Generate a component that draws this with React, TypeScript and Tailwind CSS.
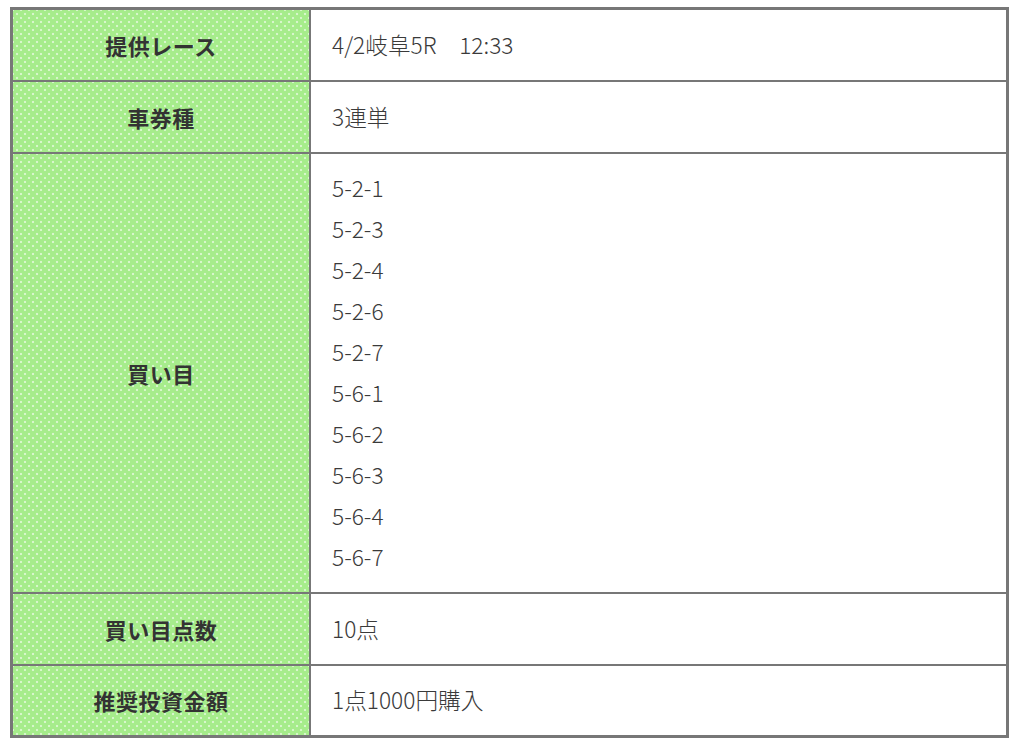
const FONT = "font-['Noto_Sans_CJK_JP','Noto_Sans',sans-serif]";

const rows: { label: string; values: string[]; h: string }[] = [
  { label: "提供レース", values: ["4/2岐阜5R\u300012:33"], h: "h-[70px]" },
  { label: "車券種", values: ["3連単"], h: "h-[70px]" },
  {
    label: "買い目",
    values: ["5-2-1", "5-2-3", "5-2-4", "5-2-6", "5-2-7", "5-6-1", "5-6-2", "5-6-3", "5-6-4", "5-6-7"],
    h: "",
  },
  { label: "買い目点数", values: ["10点"], h: "h-[70px]" },
  { label: "推奨投資金額", values: ["1点1000円購入"], h: "h-[69px]" },
];

const GREEN =
  "bg-[#a6ec8b] [background-image:radial-gradient(circle,rgba(255,255,255,0.55)_1px,transparent_1.6px),radial-gradient(circle,rgba(255,255,255,0.55)_1px,transparent_1.6px)] [background-size:8px_8px] [background-position:0_0,4px_4px]";

export default function App() {
  return (
    <div className={`min-h-[750px] bg-white pt-[7px] pl-[10px] ${FONT}`}>
      <div className="w-[999px] border-[3px] border-[#777]">
        {rows.map((row, i) => {
          const multi = row.values.length > 1;
          return (
            <div key={row.label} className={`flex ${i > 0 ? "border-t-2 border-[#777]" : ""}`}>
              <div
                className={`w-[298px] shrink-0 flex items-center justify-center border-r-2 border-[#777] ${GREEN} ${row.h}`}
              >
                <span className="text-[22px] font-bold text-[#333] tracking-[0.5px]">{row.label}</span>
              </div>
              <div
                className={`flex-1 flex flex-col justify-center pl-[21px] text-[22.7px] font-light text-[#3a3a3a] ${
                  multi ? "pt-[13px] pb-[15px]" : row.h
                }`}
              >
                {row.values.map((v) => (
                  <p key={v} className={multi ? "leading-[41px]" : "leading-normal whitespace-pre"}>
                    {v}
                  </p>
                ))}
              </div>
            </div>
          );
        })}
      </div>
    </div>
  );
}
